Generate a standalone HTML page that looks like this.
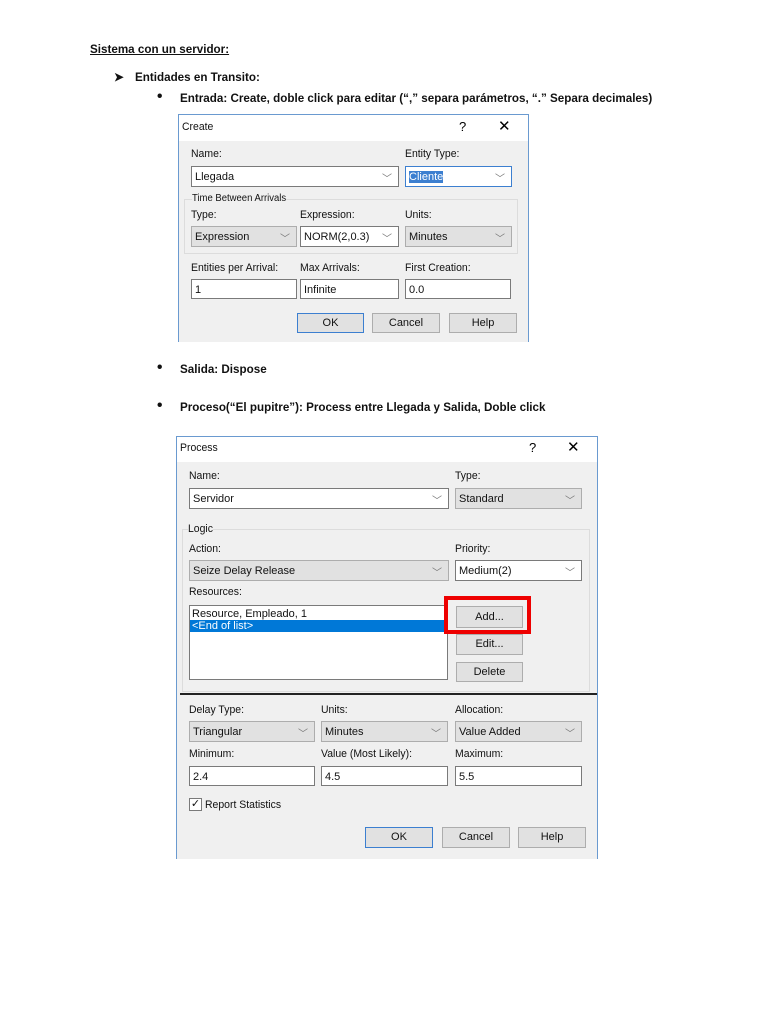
<!DOCTYPE html>
<html><head><meta charset="utf-8"><style>
body{margin:0;width:768px;height:1024px;background:#fff;position:relative;overflow:hidden;font-family:"Liberation Sans",sans-serif}
.a{position:absolute;white-space:nowrap}
.h{font-weight:bold;font-size:12px;color:#111;transform-origin:0 0;transform:scaleX(.97)}
.d{font-size:11px;color:#111;transform-origin:0 0;transform:scaleX(.95)}
.box{position:absolute;box-sizing:border-box;border:1px solid #7a7a7a;background:#fff;font-size:11px;color:#111;padding:4px 0 0 3px;overflow:hidden}
.g{background:#e1e1e1;border-color:#adadad}
.box .v{position:absolute;right:6px;top:3px;color:#777;font-size:10px}
.btn{position:absolute;box-sizing:border-box;border:1px solid #adadad;background:#e1e1e1;font-size:11px;text-align:center;color:#111}
.dlg{position:absolute;box-sizing:border-box;background:#f0f0f0;border:1px solid #6a9ad0}
.tb{position:absolute;left:0;right:0;top:0;background:#fff}
.bul{font-size:16px;top:-3px}
</style></head><body>
<div class="a h" style="left:90px;top:42px;text-decoration:underline">Sistema con un servidor:</div>
<div class="a h" style="left:114px;top:70px">➤</div>
<div class="a h" style="left:135px;top:70px">Entidades en Transito:</div>
<div class="a h" style="left:157px;top:88px;font-size:16px">•</div>
<div class="a h" style="left:180px;top:91px">Entrada: Create, doble click para editar (“,” separa parámetros, “.” Separa decimales)</div>

<!-- Create dialog -->
<div class="dlg" style="left:178px;top:114px;width:351px;height:228px;border-bottom:none">
<div class="tb" style="height:26px"></div>
</div>
<div class="a d" style="left:182px;top:121px">Create</div>
<div class="a" style="left:459px;top:119px;font-size:13px">?</div>
<div class="a" style="left:498px;top:117px;font-size:15px">✕</div>
<div class="a d" style="left:191px;top:148px">Name:</div>
<div class="a d" style="left:405px;top:148px">Entity Type:</div>
<div class="box" style="left:191px;top:166px;width:208px;height:21px">Llegada<span class="v">﹀</span></div>
<div class="box" style="left:405px;top:166px;width:107px;height:21px;border-color:#3c7fd0"><span style="background:#3c7fd0;color:#fff">Cliente</span><span class="v">﹀</span></div>
<div style="position:absolute;left:184px;top:199px;width:334px;height:55px;border:1px solid #dcdcdc;box-sizing:border-box"></div>
<div class="a d" style="left:192px;top:193px;background:#f0f0f0;font-size:10px">Time Between Arrivals</div>
<div class="a d" style="left:191px;top:209px">Type:</div>
<div class="a d" style="left:300px;top:209px">Expression:</div>
<div class="a d" style="left:405px;top:209px">Units:</div>
<div class="box g" style="left:191px;top:226px;width:106px;height:21px">Expression<span class="v">﹀</span></div>
<div class="box" style="left:300px;top:226px;width:99px;height:21px">NORM(2,0.3)<span class="v">﹀</span></div>
<div class="box g" style="left:405px;top:226px;width:107px;height:21px">Minutes<span class="v">﹀</span></div>
<div class="a d" style="left:191px;top:262px">Entities per Arrival:</div>
<div class="a d" style="left:300px;top:262px">Max Arrivals:</div>
<div class="a d" style="left:405px;top:262px">First Creation:</div>
<div class="box" style="left:191px;top:279px;width:106px;height:20px">1</div>
<div class="box" style="left:300px;top:279px;width:99px;height:20px">Infinite</div>
<div class="box" style="left:405px;top:279px;width:106px;height:20px">0.0</div>
<div class="btn" style="left:297px;top:313px;width:67px;height:20px;line-height:18px;border-color:#3c7fd0">OK</div>
<div class="btn" style="left:372px;top:313px;width:68px;height:20px;line-height:18px">Cancel</div>
<div class="btn" style="left:449px;top:313px;width:68px;height:20px;line-height:18px">Help</div>

<div class="a h" style="left:157px;top:359px;font-size:16px">•</div>
<div class="a h" style="left:180px;top:362px">Salida: Dispose</div>
<div class="a h" style="left:157px;top:397px;font-size:16px">•</div>
<div class="a h" style="left:180px;top:400px">Proceso(“El pupitre”): Process entre Llegada y Salida, Doble click</div>

<!-- Process dialog -->
<div class="dlg" style="left:176px;top:436px;width:422px;height:423px;border-bottom:none">
<div class="tb" style="height:25px"></div>
</div>
<div class="a d" style="left:180px;top:442px">Process</div>
<div class="a" style="left:529px;top:440px;font-size:13px">?</div>
<div class="a" style="left:567px;top:438px;font-size:15px">✕</div>
<div class="a d" style="left:189px;top:470px">Name:</div>
<div class="a d" style="left:455px;top:470px">Type:</div>
<div class="box" style="left:189px;top:488px;width:260px;height:21px">Servidor<span class="v">﹀</span></div>
<div class="box g" style="left:455px;top:488px;width:127px;height:21px">Standard<span class="v">﹀</span></div>
<div style="position:absolute;left:182px;top:529px;width:408px;height:163px;border:1px solid #dcdcdc;box-sizing:border-box"></div>
<div class="a d" style="left:188px;top:523px;background:#f0f0f0">Logic</div>
<div class="a d" style="left:189px;top:543px">Action:</div>
<div class="a d" style="left:455px;top:543px">Priority:</div>
<div class="box g" style="left:189px;top:560px;width:260px;height:21px">Seize Delay Release<span class="v">﹀</span></div>
<div class="box" style="left:455px;top:560px;width:127px;height:21px">Medium(2)<span class="v">﹀</span></div>
<div class="a d" style="left:189px;top:586px">Resources:</div>
<div class="box" style="left:189px;top:605px;width:259px;height:75px;padding:2px 0 0 0;line-height:12px">
<div style="padding-left:2px">Resource, Empleado, 1</div>
<div style="padding-left:2px;background:#0078d7;color:#fff">&lt;End of list&gt;</div></div>
<div class="btn" style="left:456px;top:606px;width:67px;height:22px;line-height:20px">Add...</div>
<div style="position:absolute;left:444px;top:596px;width:87px;height:38px;border:4px solid #ee0000;box-sizing:border-box"></div>
<div class="btn" style="left:456px;top:634px;width:67px;height:21px;line-height:19px">Edit...</div>
<div class="btn" style="left:456px;top:662px;width:67px;height:20px;line-height:18px">Delete</div>
<div style="position:absolute;left:180px;top:693px;width:417px;height:2px;background:#222"></div>
<div class="a d" style="left:189px;top:704px">Delay Type:</div>
<div class="a d" style="left:321px;top:704px">Units:</div>
<div class="a d" style="left:455px;top:704px">Allocation:</div>
<div class="box g" style="left:189px;top:721px;width:126px;height:21px">Triangular<span class="v">﹀</span></div>
<div class="box g" style="left:321px;top:721px;width:127px;height:21px">Minutes<span class="v">﹀</span></div>
<div class="box g" style="left:455px;top:721px;width:127px;height:21px">Value Added<span class="v">﹀</span></div>
<div class="a d" style="left:189px;top:748px">Minimum:</div>
<div class="a d" style="left:321px;top:748px">Value (Most Likely):</div>
<div class="a d" style="left:455px;top:748px">Maximum:</div>
<div class="box" style="left:189px;top:766px;width:126px;height:20px">2.4</div>
<div class="box" style="left:321px;top:766px;width:127px;height:20px">4.5</div>
<div class="box" style="left:455px;top:766px;width:127px;height:20px">5.5</div>
<div class="box" style="left:189px;top:798px;width:13px;height:13px;padding:0;font-size:11px;line-height:11px;text-align:center">✓</div>
<div class="a d" style="left:205px;top:799px">Report Statistics</div>
<div class="btn" style="left:365px;top:827px;width:68px;height:21px;line-height:19px;border-color:#3c7fd0">OK</div>
<div class="btn" style="left:442px;top:827px;width:68px;height:21px;line-height:19px">Cancel</div>
<div class="btn" style="left:518px;top:827px;width:68px;height:21px;line-height:19px">Help</div>
</body></html>
